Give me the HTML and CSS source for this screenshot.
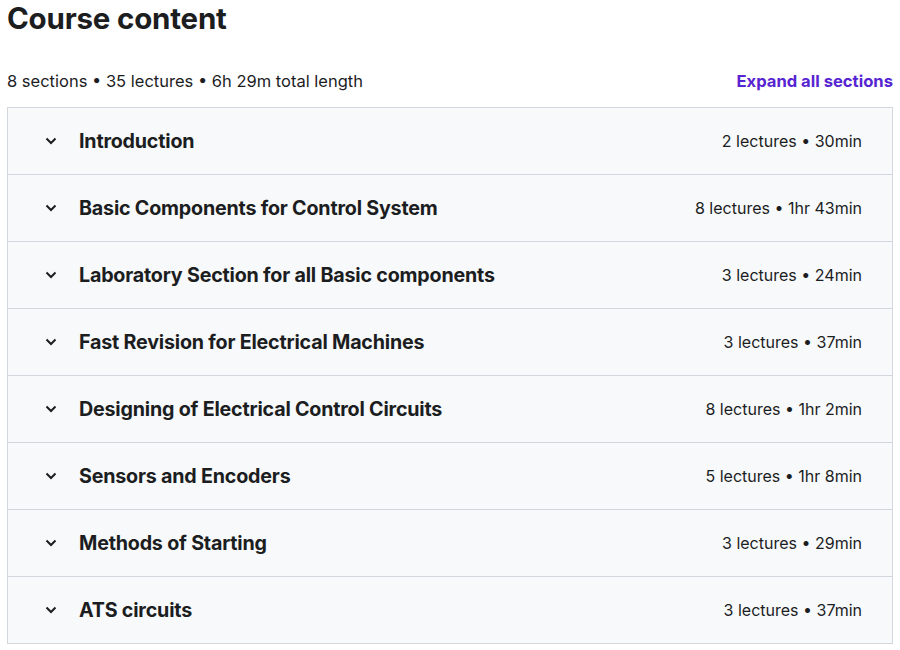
FILE: index.html
```html
<!DOCTYPE html>
<html lang="en">

<head>
    <meta charset="UTF-8">
    <meta name="viewport" content="width=device-width, initial-scale=1.0">
    <title>Course content</title>
    <link rel="stylesheet" href="styles.css">
</head>

<body>
    <div class="curriculum">
        <h2>Course content</h2>
        <div class="summary">
            <span>8 sections • 35 lectures • 6h 29m total length</span>
            <button class="expand">Expand all sections</button>
        </div>
        <div class="sections">
            <div class="section">
                <svg class="chevron" viewBox="0 0 12 8"><path d="M1.5 1.5 6 6l4.5-4.5" /></svg>
                <span class="title">Introduction</span>
                <span class="meta">2 lectures • 30min</span>
            </div>
            <div class="section">
                <svg class="chevron" viewBox="0 0 12 8"><path d="M1.5 1.5 6 6l4.5-4.5" /></svg>
                <span class="title">Basic Components for Control System</span>
                <span class="meta">8 lectures • 1hr 43min</span>
            </div>
            <div class="section">
                <svg class="chevron" viewBox="0 0 12 8"><path d="M1.5 1.5 6 6l4.5-4.5" /></svg>
                <span class="title">Laboratory Section for all Basic components</span>
                <span class="meta">3 lectures • 24min</span>
            </div>
            <div class="section">
                <svg class="chevron" viewBox="0 0 12 8"><path d="M1.5 1.5 6 6l4.5-4.5" /></svg>
                <span class="title">Fast Revision for Electrical Machines</span>
                <span class="meta">3 lectures • 37min</span>
            </div>
            <div class="section">
                <svg class="chevron" viewBox="0 0 12 8"><path d="M1.5 1.5 6 6l4.5-4.5" /></svg>
                <span class="title">Designing of Electrical Control Circuits</span>
                <span class="meta">8 lectures • 1hr 2min</span>
            </div>
            <div class="section">
                <svg class="chevron" viewBox="0 0 12 8"><path d="M1.5 1.5 6 6l4.5-4.5" /></svg>
                <span class="title">Sensors and Encoders</span>
                <span class="meta">5 lectures • 1hr 8min</span>
            </div>
            <div class="section">
                <svg class="chevron" viewBox="0 0 12 8"><path d="M1.5 1.5 6 6l4.5-4.5" /></svg>
                <span class="title">Methods of Starting</span>
                <span class="meta">3 lectures • 29min</span>
            </div>
            <div class="section">
                <svg class="chevron" viewBox="0 0 12 8"><path d="M1.5 1.5 6 6l4.5-4.5" /></svg>
                <span class="title">ATS circuits</span>
                <span class="meta">3 lectures • 37min</span>
            </div>
        </div>
    </div>
</body>

</html>
```

FILE: styles.css
```css
body {
    margin: 0;
    padding: 0 7px;
    font-family: Inter, "Noto Sans", sans-serif;
    color: #1c1d1f;
    background: #fff;
}

h2 {
    margin: 0;
    padding-top: 1px;
    font-size: 29.5px;
    line-height: 34px;
    font-weight: 700;
    letter-spacing: -0.2px;
}

.summary {
    display: flex;
    justify-content: space-between;
    align-items: center;
    margin-top: 30px;
    height: 32px;
    font-size: 16.5px;
}

.expand {
    border: none;
    background: none;
    padding: 0;
    font-family: inherit;
    font-size: 16.6px;
    font-weight: 700;
    color: #5624d0;
    cursor: pointer;
}

.sections {
    margin-top: 10px;
    border: 1px solid #d1d7dc;
}

.section {
    display: flex;
    align-items: center;
    height: 66px;
    padding: 0 30px 0 37px;
    background: #f7f9fa;
    border-bottom: 1px solid #d1d7dc;
}

.section:last-child {
    border-bottom: none;
}

.chevron {
    width: 12px;
    height: 8px;
    fill: none;
    stroke: #1c1d1f;
    stroke-width: 2;
    margin-right: 22px;
}

.title {
    flex: 1;
    font-size: 19.7px;
    font-weight: 700;
    letter-spacing: -0.2px;
}

.meta {
    font-size: 16px;
}
```
